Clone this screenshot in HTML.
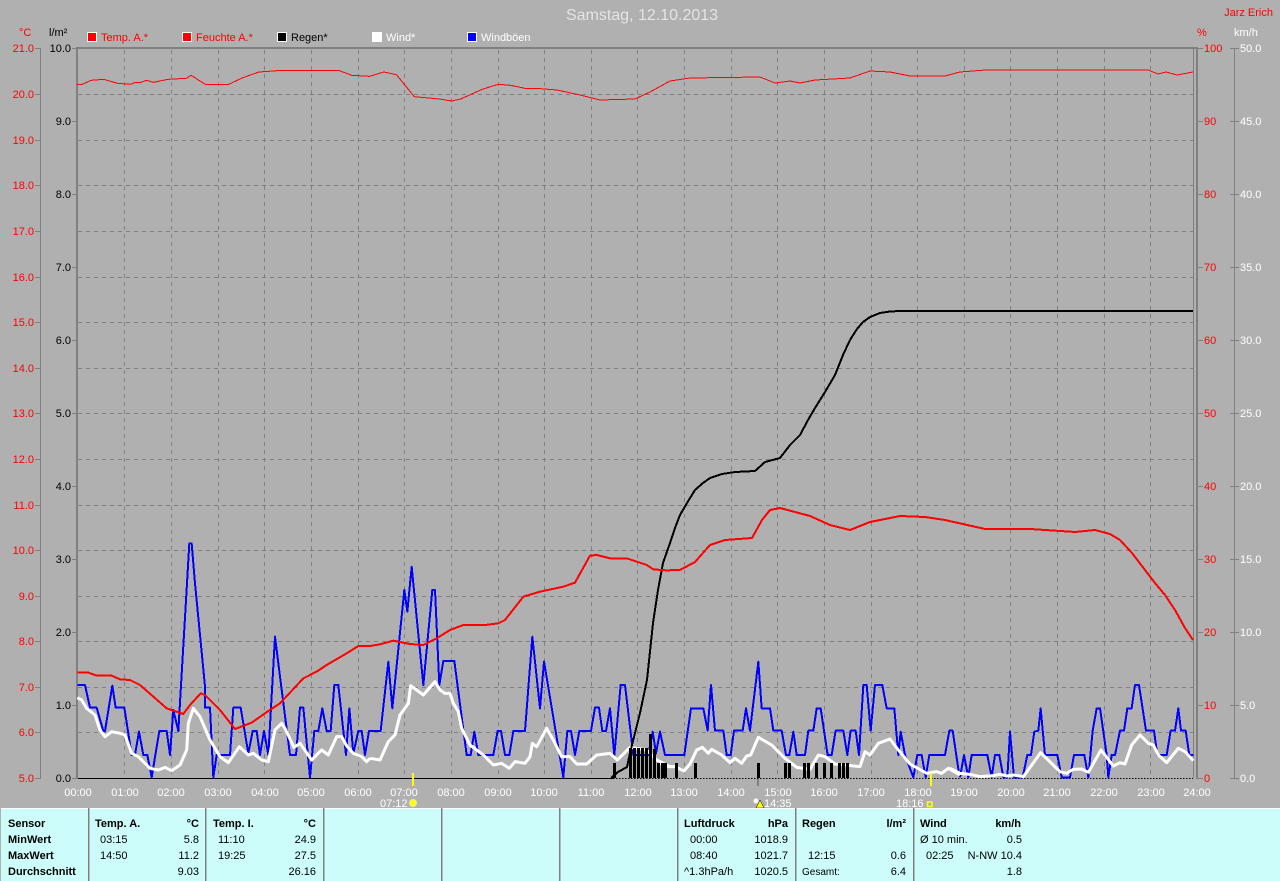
<!DOCTYPE html>
<html lang="de">
<head>
<meta charset="utf-8">
<title>Samstag, 12.10.2013</title>
<style>
html,body{margin:0;padding:0;width:1280px;height:881px;overflow:hidden;background:#b0b0b0}
svg{position:absolute;left:0;top:0;display:block}
text{font-family:"Liberation Sans",sans-serif;font-size:11px}
.l{fill:#f00}.k{fill:#000}.w{fill:#fff}
.e{text-anchor:end}.m{text-anchor:middle}
.b{font-weight:bold;fill:#000}.t{fill:#000}
polyline{fill:none;vector-effect:non-scaling-stroke;shape-rendering:crispEdges;stroke-linejoin:round}
.blue{stroke:#0000ff;stroke-width:2}
.white{stroke:#fff;stroke-width:3;shape-rendering:auto}
.red{stroke:#f00;stroke-width:2}
.red1{stroke:#f00;stroke-width:1}
.blk{stroke:#000;stroke-width:2}
</style>
</head>
<body>
<svg width="1280" height="881" viewBox="0 0 1280 881" xmlns="http://www.w3.org/2000/svg">
<rect width="1280" height="881" fill="#b0b0b0"/>
<text x="642" y="20" class="m" style="font-size:16px;fill:#e4e4e4">Samstag, 12.10.2013</text>
<text x="1273" y="16" class="l e" style="font-size:11px">Jarz Erich</text>

<!-- legend -->
<g stroke="#fff" stroke-width="1">
<rect x="87.5" y="32.5" width="9" height="9" fill="#f00"/>
<rect x="182.5" y="32.5" width="9" height="9" fill="#f00"/>
<rect x="277.5" y="32.5" width="9" height="9" fill="#000"/>
<rect x="372.5" y="32.5" width="9" height="9" fill="#fff"/>
<rect x="467.5" y="32.5" width="9" height="9" fill="#00f"/>
</g>
<text x="101" y="41" class="l">Temp. A.*</text>
<text x="196" y="41" class="l">Feuchte A.*</text>
<text x="291" y="41" class="k">Regen*</text>
<text x="386" y="41" class="w">Wind*</text>
<text x="481" y="41" class="w">Windböen</text>
<text x="19" y="36" class="l">°C</text>
<text x="49" y="36" class="k">l/m²</text>
<text x="1197" y="36" class="l">%</text>
<text x="1234" y="36" class="w">km/h</text>

<!-- grid -->
<g stroke="#808080" stroke-width="1" stroke-dasharray="4 4" fill="none" shape-rendering="crispEdges">
<path d="M78 94.5H1193M78 140.5H1193M78 185.5H1193M78 231.5H1193M78 277.5H1193M78 322.5H1193M78 368.5H1193M78 413.5H1193M78 459.5H1193M78 505.5H1193M78 550.5H1193M78 596.5H1193M78 641.5H1193M78 687.5H1193M78 732.5H1193"/>
<path d="M124.5 50V778M171.5 50V778M218.5 50V778M264.5 50V778M311.5 50V778M358.5 50V778M404.5 50V778M451.5 50V778M498.5 50V778M544.5 50V778M591.5 50V778M637.5 50V778M684.5 50V778M731.5 50V778M777.5 50V778M824.5 50V778M871.5 50V778M917.5 50V778M964.5 50V778M1010.5 50V778M1057.5 50V778M1104.5 50V778M1150.5 50V778"/>
</g>

<!-- axes -->
<g stroke="#808080" fill="none" shape-rendering="crispEdges">
<path stroke-width="2" d="M76 48H1198M77 48V779M1197 48V779"/>
<path stroke-width="1" d="M1193.5 48V778M40.5 48V778M1234.5 48V778"/>
<path stroke-width="1" d="M35 48.5H41M35 94.5H41M35 140.5H41M35 185.5H41M35 231.5H41M35 277.5H41M35 322.5H41M35 368.5H41M35 413.5H41M35 459.5H41M35 505.5H41M35 550.5H41M35 596.5H41M35 641.5H41M35 687.5H41M35 732.5H41M35 778.5H41"/>
<path stroke-width="1" d="M72 48.5H77M72 121.5H77M72 194.5H77M72 267.5H77M72 340.5H77M72 413.5H77M72 486.5H77M72 559.5H77M72 632.5H77M72 705.5H77M72 778.5H77"/>
<path stroke-width="1" d="M1197 48.5H1203M1197 121.5H1203M1197 194.5H1203M1197 267.5H1203M1197 340.5H1203M1197 413.5H1203M1197 486.5H1203M1197 559.5H1203M1197 632.5H1203M1197 705.5H1203M1197 778.5H1203"/>
<path stroke-width="1" d="M1230 48.5H1239M1230 121.5H1239M1230 194.5H1239M1230 267.5H1239M1230 340.5H1239M1230 413.5H1239M1230 486.5H1239M1230 559.5H1239M1230 632.5H1239M1230 705.5H1239M1230 778.5H1239"/>
<path stroke-width="2" d="M758 779V786"/>
</g>

<!-- left temp labels -->
<g class="l e">
<text x="34" y="52" class="l e">21.0</text><text x="34" y="98" class="l e">20.0</text><text x="34" y="144" class="l e">19.0</text><text x="34" y="189" class="l e">18.0</text><text x="34" y="235" class="l e">17.0</text><text x="34" y="281" class="l e">16.0</text><text x="34" y="326" class="l e">15.0</text><text x="34" y="372" class="l e">14.0</text><text x="34" y="417" class="l e">13.0</text><text x="34" y="463" class="l e">12.0</text><text x="34" y="509" class="l e">11.0</text><text x="34" y="554" class="l e">10.0</text><text x="34" y="600" class="l e">9.0</text><text x="34" y="645" class="l e">8.0</text><text x="34" y="691" class="l e">7.0</text><text x="34" y="736" class="l e">6.0</text><text x="34" y="782" class="l e">5.0</text>
</g>
<!-- rain labels -->
<text x="71" y="52" class="k e">10.0</text><text x="71" y="125" class="k e">9.0</text><text x="71" y="198" class="k e">8.0</text><text x="71" y="271" class="k e">7.0</text><text x="71" y="344" class="k e">6.0</text><text x="71" y="417" class="k e">5.0</text><text x="71" y="490" class="k e">4.0</text><text x="71" y="563" class="k e">3.0</text><text x="71" y="636" class="k e">2.0</text><text x="71" y="709" class="k e">1.0</text><text x="71" y="782" class="k e">0.0</text>
<!-- humidity labels -->
<text x="1204" y="52" class="l">100</text><text x="1204" y="125" class="l">90</text><text x="1204" y="198" class="l">80</text><text x="1204" y="271" class="l">70</text><text x="1204" y="344" class="l">60</text><text x="1204" y="417" class="l">50</text><text x="1204" y="490" class="l">40</text><text x="1204" y="563" class="l">30</text><text x="1204" y="636" class="l">20</text><text x="1204" y="709" class="l">10</text><text x="1204" y="782" class="l">0</text>
<!-- wind labels -->
<text x="1240" y="52" class="w">50.0</text><text x="1240" y="125" class="w">45.0</text><text x="1240" y="198" class="w">40.0</text><text x="1240" y="271" class="w">35.0</text><text x="1240" y="344" class="w">30.0</text><text x="1240" y="417" class="w">25.0</text><text x="1240" y="490" class="w">20.0</text><text x="1240" y="563" class="w">15.0</text><text x="1240" y="636" class="w">10.0</text><text x="1240" y="709" class="w">5.0</text><text x="1240" y="782" class="w">0.0</text>
<!-- time labels -->
<text x="78" y="796" class="w m">00:00</text><text x="125" y="796" class="w m">01:00</text><text x="171" y="796" class="w m">02:00</text><text x="218" y="796" class="w m">03:00</text><text x="265" y="796" class="w m">04:00</text><text x="311" y="796" class="w m">05:00</text><text x="358" y="796" class="w m">06:00</text><text x="404" y="796" class="w m">07:00</text><text x="451" y="796" class="w m">08:00</text><text x="498" y="796" class="w m">09:00</text><text x="544" y="796" class="w m">10:00</text><text x="591" y="796" class="w m">11:00</text><text x="638" y="796" class="w m">12:00</text><text x="684" y="796" class="w m">13:00</text><text x="731" y="796" class="w m">14:00</text><text x="778" y="796" class="w m">15:00</text><text x="824" y="796" class="w m">16:00</text><text x="871" y="796" class="w m">17:00</text><text x="918" y="796" class="w m">18:00</text><text x="964" y="796" class="w m">19:00</text><text x="1011" y="796" class="w m">20:00</text><text x="1057" y="796" class="w m">21:00</text><text x="1104" y="796" class="w m">22:00</text><text x="1151" y="796" class="w m">23:00</text><text x="1197" y="796" class="w m">24:00</text>

<!-- zero line -->
<path d="M78 778.5H613" stroke="#000" stroke-width="1.4" fill="none" shape-rendering="crispEdges"/>
<path d="M613 778.5H1193" stroke="#000" stroke-width="1.4" stroke-dasharray="1.5 1.5" fill="none" shape-rendering="crispEdges"/>

<!-- blue gusts -->
<g transform="translate(70 540) scale(.33333)">
<polyline class="blue" points="22,435 45,435 60,503 80,503 100,573 105,573 127,437 137,503 163,503 185,645 195,645 207,575 220,645 232,645 245,712 268,573 290,573 300,645 310,510 325,573 358,10 365,10 375,130 405,440 405,503 420,503 430,712 440,645 480,645 490,503 512,503 535,640 548,573 560,573 570,645 582,573 595,645 615,290 625,370 660,645 678,645 690,503 700,503 720,712 733,573 745,573 757,505 770,573 782,573 793,435 805,435 828,645 838,505 850,640 865,573 875,573 885,645 897,573 900,573"/>
</g>
<g transform="translate(370 540) scale(.33333)">
<polyline class="blue" points="0,573 32,573 55,365 67,505 103,150 112,215 125,80 160,435 187,150 195,150 208,435 220,363 253,363 290,645 302,645 313,575 325,645 370,645 383,573 393,573 405,645 418,645 430,573 465,573 487,290 510,505 522,365 580,712 592,573 603,573 615,645 628,573 663,573 675,503 687,503 697,573 708,573 720,505 733,645 752,435 765,435 790,645 835,645 848,575 858,640 870,575 885,645 900,645"/>
</g>
<g transform="translate(660 640) scale(.33333)">
<polyline class="blue" points="30,345 73,345 93,205 130,205 143,272 153,135 165,272 190,272 200,345 212,345 222,272 248,272 258,205 270,272 295,65 305,205 330,205 340,272 365,272 378,345 388,345 400,275 410,345 435,345 445,272 460,272 470,205 482,205 503,345 515,345 527,272 550,272 562,345 572,272 587,272 597,345 610,135 620,135 632,272 645,135 667,135 680,205 703,205 715,345 722,275 735,345 760,412 772,345 785,345 797,412 808,345 855,345 868,272 878,272 897,400 900,410"/>
</g>
<g transform="translate(950 640) scale(.33333)">
<polyline class="blue" points="30,412 42,345 55,412 65,345 112,345 125,412 135,345 148,345 160,412 172,412 180,275 192,412 218,412 232,345 243,345 253,275 265,272 272,205 285,345 322,345 335,412 360,412 372,345 403,345 415,412 428,272 440,205 450,205 470,345 475,412 485,345 495,345 510,272 522,272 532,205 545,205 555,135 567,135 588,272 612,272 622,345 650,345 662,272 675,272 685,205 693,272 707,272 718,345 730,345"/>
</g>

<!-- white wind -->
<g transform="translate(70 540) scale(.33333)">
<polyline class="white" points="22,473 35,480 50,505 75,525 90,570 105,590 125,575 150,580 165,585 185,640 205,650 240,685 265,690 285,682 305,692 330,675 350,630 355,550 370,505 390,530 420,600 450,650 475,668 508,620 535,645 550,640 575,660 595,665 615,570 635,550 645,565 672,622 690,610 725,660 755,630 775,645 800,590 815,590 830,618 850,640 875,650 890,665 900,655"/>
</g>
<g transform="translate(370 540) scale(.33333)">
<polyline class="white" points="0,655 30,660 55,605 75,585 90,525 115,490 122,437 160,465 195,425 210,450 225,460 240,460 250,490 265,515 275,565 300,615 340,645 370,675 395,670 418,685 435,665 465,670 480,650 487,610 500,620 530,565 550,600 575,650 600,650 620,672 650,672 680,645 720,640 742,660 780,622 830,630 860,660 900,680"/>
</g>
<g transform="translate(660 640) scale(.33333)">
<polyline class="white" points="0,370 25,380 45,380 72,393 90,372 110,330 127,322 145,340 155,328 185,345 210,368 225,355 245,370 260,348 272,345 295,292 335,315 375,355 410,382 450,388 475,345 495,350 525,372 600,380 615,335 630,345 655,310 690,297 715,330 750,372 800,400 830,395 845,400 865,385 900,405"/>
</g>
<g transform="translate(950 640) scale(.33333)">
<polyline class="white" points="0,385 30,400 60,403 90,410 130,407 150,403 170,408 190,405 220,410 272,338 330,395 350,400 370,388 395,387 415,397 453,330 490,378 510,368 525,372 545,315 570,285 595,310 610,315 625,345 650,368 685,325 705,335 730,362"/>
</g>

<!-- rain bars -->
<g fill="#000" shape-rendering="crispEdges">
<rect x="613" y="763" width="3" height="15"/>
<rect x="629" y="748" width="3" height="30"/><rect x="633" y="748" width="3" height="30"/><rect x="637" y="748" width="3" height="30"/><rect x="641" y="748" width="3" height="30"/><rect x="645" y="748" width="3" height="30"/>
<rect x="649" y="734" width="3" height="44"/><rect x="653" y="749" width="3" height="29"/>
<rect x="657" y="763" width="3" height="15"/><rect x="661" y="763" width="3" height="15"/><rect x="664" y="763" width="3" height="15"/>
<rect x="675" y="763" width="3" height="15"/><rect x="694" y="763" width="3" height="15"/><rect x="757" y="763" width="3" height="15"/>
<rect x="784" y="763" width="3" height="15"/><rect x="788" y="763" width="3" height="15"/><rect x="803" y="763" width="3" height="15"/><rect x="807" y="763" width="3" height="15"/><rect x="815" y="763" width="3" height="15"/><rect x="823" y="763" width="3" height="15"/><rect x="830" y="763" width="3" height="15"/><rect x="838" y="763" width="3" height="15"/><rect x="842" y="763" width="3" height="15"/><rect x="846" y="763" width="3" height="15"/>
</g>

<!-- rain total line -->
<polyline class="blk" points="611,778 618,772 627,767 630,753 640,713 647,680 653,623 658,590 663,563 670,543 675,528 680,515 687,503 695,490 703,483 710,478 722,474 735,472 755,471 765,462 780,458 790,445 800,435 808,420 815,408 825,392 835,375 843,355 850,340 857,329 863,322 870,317 880,313 890,311.5 900,311 1193,311"/>

<!-- thin red -->
<g transform="scale(.35714 .33333)">
<polyline class="red1" points="215,253 230,253 255,241 290,238 330,250 365,253 380,247 395,247 410,241 430,247 470,238 522,235 535,226 575,253 640,253 680,233 725,216 790,211 948,211 985,226 1035,229 1075,216 1110,224 1160,290 1230,297 1265,303 1290,297 1350,268 1395,253 1430,256 1470,265 1500,265 1560,270"/>
</g>
<polyline class="red1" points="557,90 580,95 600,100 635,99 650,92 670,81 690,78 760,77 775,83 790,81 800,83 815,80 850,78 870,71 890,72 910,76 945,76 960,72 985,70 1148,70 1158,74 1166,72 1177,75 1193,72"/>

<!-- thick red -->
<g transform="translate(70 540) scale(.33333)">
<polyline class="red" points="22,398 55,398 80,407 125,407 150,418 180,420 210,435 250,470 290,505 340,522 360,495 392,460 405,465 450,510 495,567 545,548 595,513 630,490 700,415 740,395 770,375 830,340 865,318 900,318"/>
</g>
<g transform="translate(370 540) scale(.33333)">
<polyline class="red" points="0,318 30,313 70,302 120,312 160,315 200,295 240,270 280,255 345,255 385,250 405,240 460,170 510,155 580,140 615,128 660,47 680,45 720,55 770,55 830,75 850,88 900,92"/>
</g>
<polyline class="red" points="670,570 680,570 695,562 710,545 725,540 752,538 762,520 770,510 780,508 810,516 830,525 850,530 870,522 900,516 925,517 945,520 985,529 1030,529 1075,532 1095,530 1110,534 1120,540 1132,553 1145,570 1155,583 1165,595 1175,610 1185,628 1193,640"/>

<!-- sun markers -->
<g shape-rendering="crispEdges">
<rect x="412" y="773" width="2" height="13" fill="#ff0"/>
<rect x="930" y="773" width="2" height="13" fill="#ff0"/>
</g>
<text x="380" y="807" class="w">07:12</text>
<circle cx="413" cy="803" r="3.5" fill="#ff0" stroke="#e8e8c0" stroke-width="1"/>
<text x="764" y="807" class="w">14:35</text>
<circle cx="756" cy="801" r="2.5" fill="#fff"/>
<path d="M760 800L764 808H756Z" fill="#ff0" stroke="#000" stroke-width=".5"/>
<text x="896" y="807" class="w">18:16</text>
<rect x="927.5" y="802" width="4.5" height="4.5" fill="none" stroke="#ff0" stroke-width="1.5"/>

<!-- bottom panel -->
<rect x="1" y="808" width="1279" height="73" fill="#ccfdfa"/>
<path d="M1 808.5H1280" stroke="#fff" stroke-width="1" shape-rendering="crispEdges"/>
<g stroke="#808080" stroke-width="1.5" shape-rendering="crispEdges" fill="none">
<path d="M88.5 808V881M205.5 808V881M323.5 808V881M441.5 808V881M559.5 808V881M677.5 808V881M795.5 808V881M913.5 808V881"/>
</g>

<text x="8" y="827" class="b">Sensor</text>
<text x="8" y="843" class="b">MinWert</text>
<text x="8" y="859" class="b">MaxWert</text>
<text x="8" y="875" class="b">Durchschnitt</text>

<text x="95" y="827" class="b">Temp. A.</text><text x="199" y="827" class="b e">°C</text>
<text x="100" y="843" class="t">03:15</text><text x="199" y="843" class="t e">5.8</text>
<text x="100" y="859" class="t">14:50</text><text x="199" y="859" class="t e">11.2</text>
<text x="199" y="875" class="t e">9.03</text>

<text x="213" y="827" class="b">Temp. I.</text><text x="316" y="827" class="b e">°C</text>
<text x="218" y="843" class="t">11:10</text><text x="316" y="843" class="t e">24.9</text>
<text x="218" y="859" class="t">19:25</text><text x="316" y="859" class="t e">27.5</text>
<text x="316" y="875" class="t e">26.16</text>

<text x="684" y="827" class="b">Luftdruck</text><text x="788" y="827" class="b e">hPa</text>
<text x="690" y="843" class="t">00:00</text><text x="788" y="843" class="t e">1018.9</text>
<text x="690" y="859" class="t">08:40</text><text x="788" y="859" class="t e">1021.7</text>
<text x="684" y="875" class="t">^1.3hPa/h</text><text x="788" y="875" class="t e">1020.5</text>

<text x="802" y="827" class="b">Regen</text><text x="906" y="827" class="b e">l/m²</text>
<text x="808" y="859" class="t">12:15</text><text x="906" y="859" class="t e">0.6</text>
<text x="802" y="875" class="t" style="font-size:10px">Gesamt:</text><text x="906" y="875" class="t e">6.4</text>

<text x="920" y="827" class="b">Wind</text><text x="1021" y="827" class="b e">km/h</text>
<text x="920" y="843" class="t">Ø 10 min.</text><text x="1022" y="843" class="t e">0.5</text>
<text x="926" y="859" class="t">02:25</text><text x="1022" y="859" class="t e">N-NW 10.4</text>
<text x="1022" y="875" class="t e">1.8</text>
</svg>
</body>
</html>
